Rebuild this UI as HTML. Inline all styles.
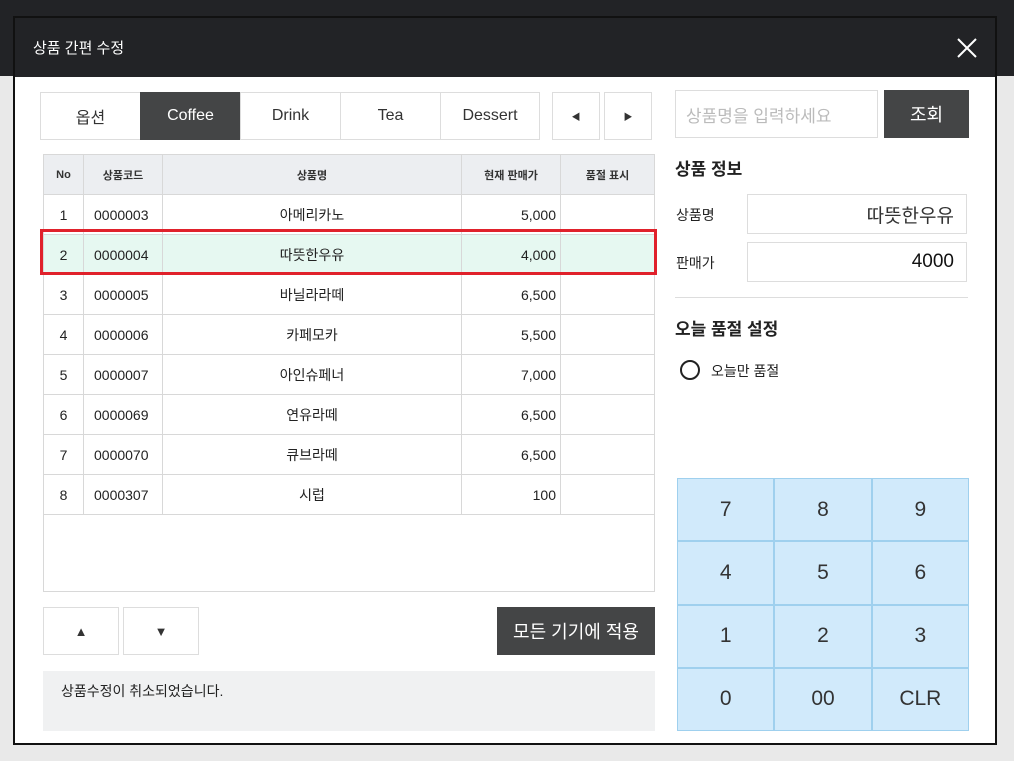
<!DOCTYPE html>
<html><head><meta charset="utf-8"><style>
*{box-sizing:border-box;margin:0;padding:0}
body{width:1014px;height:761px;overflow:hidden;background:#e9e9e9;font-family:"Liberation Sans","Noto Sans CJK KR",sans-serif;position:relative}
.abs{position:absolute}
.top{left:0;top:0;width:1014px;height:76px;background:#222326}
.dlg{left:13px;top:16px;width:984px;height:729px;background:#fff;border:2px solid #111}
.hdr{left:0;top:0;width:980px;height:59px;background:#222326;color:#fff;font-size:15px}
.btn{display:flex;align-items:center;justify-content:center;border:1px solid #ddd;background:#fff;color:#333;font-size:16px}
.dark{background:#444546;color:#fff;border-color:#444546}
table{border-collapse:collapse;font-size:14px;color:#222}
td,th{border:1px solid #d8d8d8;height:40px;padding:0}
th{background:#eceef1;font-size:11px;font-weight:bold;color:#333}
.key{display:flex;align-items:center;justify-content:center;font-size:21px;color:#333;background:#d1eafb;border:1px solid #9fd0ee}
</style></head><body>
<div class="abs top"></div>
<div class="abs dlg">
 <div class="abs hdr"><span class="abs" style="left:18px;top:19px">상품 간편 수정</span>
  <svg class="abs" style="left:941px;top:19px" width="22" height="22"><path d="M2 2L20 20M20 2L2 20" stroke="#fff" stroke-width="2"/></svg></div>
</div>
<div class="abs btn" style="left:40px;top:92px;width:101px;height:48px">옵션</div>
<div class="abs btn dark" style="left:140px;top:92px;width:101px;height:48px">Coffee</div>
<div class="abs btn" style="left:240px;top:92px;width:101px;height:48px">Drink</div>
<div class="abs btn" style="left:340px;top:92px;width:101px;height:48px">Tea</div>
<div class="abs btn" style="left:440px;top:92px;width:100px;height:48px">Dessert</div>
<div class="abs btn" style="left:552px;top:92px;width:48px;height:48px;font-size:9px">◀</div>
<div class="abs btn" style="left:604px;top:92px;width:48px;height:48px;font-size:9px">▶</div>
<div class="abs btn" style="left:675px;top:90px;width:203px;height:48px;justify-content:flex-start;padding-left:10px;color:#bbb;font-size:17px">상품명을 입력하세요</div>
<div class="abs btn dark" style="left:884px;top:90px;width:85px;height:48px;font-size:18px">조회</div>
<div class="abs" style="left:43px;top:154px;width:612px;height:438px;border:1px solid #d8d8d8;border-top:none"></div>
<table class="abs" style="left:43px;top:154px;width:612px">
<tr><th style="width:40px">No</th><th style="width:79px">상품코드</th><th style="width:299px">상품명</th><th style="width:99px">현재 판매가</th><th>품절 표시</th></tr>
<tr><td align=center>1</td><td style="padding-left:10px">0000003</td><td align=center>아메리카노</td><td align=right style="padding-right:4px">5,000</td><td></td></tr>
<tr style="background:#e6f8f1"><td align=center>2</td><td style="padding-left:10px">0000004</td><td align=center>따뜻한우유</td><td align=right style="padding-right:4px">4,000</td><td></td></tr>
<tr><td align=center>3</td><td style="padding-left:10px">0000005</td><td align=center>바닐라라떼</td><td align=right style="padding-right:4px">6,500</td><td></td></tr>
<tr><td align=center>4</td><td style="padding-left:10px">0000006</td><td align=center>카페모카</td><td align=right style="padding-right:4px">5,500</td><td></td></tr>
<tr><td align=center>5</td><td style="padding-left:10px">0000007</td><td align=center>아인슈페너</td><td align=right style="padding-right:4px">7,000</td><td></td></tr>
<tr><td align=center>6</td><td style="padding-left:10px">0000069</td><td align=center>연유라떼</td><td align=right style="padding-right:4px">6,500</td><td></td></tr>
<tr><td align=center>7</td><td style="padding-left:10px">0000070</td><td align=center>큐브라떼</td><td align=right style="padding-right:4px">6,500</td><td></td></tr>
<tr><td align=center>8</td><td style="padding-left:10px">0000307</td><td align=center>시럽</td><td align=right style="padding-right:4px">100</td><td></td></tr>
</table>
<div class="abs" style="left:40px;top:229px;width:617px;height:46px;border:3px solid #e0212b"></div>
<div class="abs btn" style="left:43px;top:607px;width:76px;height:48px;font-size:13px">▲</div>
<div class="abs btn" style="left:123px;top:607px;width:76px;height:48px;font-size:13px">▼</div>
<div class="abs btn dark" style="left:497px;top:607px;width:158px;height:48px;font-size:18px">모든 기기에 적용</div>
<div class="abs" style="left:43px;top:671px;width:612px;height:60px;background:#f0f1f2;font-size:14px;color:#222;padding:10px 0 0 18px">상품수정이 취소되었습니다.</div>
<div class="abs" style="left:675px;top:155px;font-size:17px;font-weight:bold;color:#222">상품 정보</div>
<div class="abs" style="left:676px;top:205px;font-size:14px;color:#222">상품명</div>
<div class="abs btn" style="left:747px;top:194px;width:220px;height:40px;justify-content:flex-end;padding-right:12px;font-size:19px">따뜻한우유</div>
<div class="abs" style="left:676px;top:253px;font-size:14px;color:#222">판매가</div>
<div class="abs btn" style="left:747px;top:242px;width:220px;height:40px;justify-content:flex-end;padding-right:12px;font-size:19px;color:#111">4000</div>
<div class="abs" style="left:675px;top:297px;width:293px;height:1px;background:#ddd"></div>
<div class="abs" style="left:675px;top:315px;font-size:17px;font-weight:bold;color:#222">오늘 품절 설정</div>
<div class="abs" style="left:680px;top:360px;width:20px;height:20px;border:2px solid #222;border-radius:50%"></div>
<div class="abs" style="left:711px;top:361px;font-size:14px;color:#222">오늘만 품절</div>
<div class="abs" style="left:677px;top:478px;width:292px;height:253px;display:grid;grid-template-columns:repeat(3,1fr);grid-template-rows:repeat(4,1fr)">
<div class="key">7</div><div class="key">8</div><div class="key">9</div>
<div class="key">4</div><div class="key">5</div><div class="key">6</div>
<div class="key">1</div><div class="key">2</div><div class="key">3</div>
<div class="key">0</div><div class="key">00</div><div class="key">CLR</div>
</div>
</body></html>
